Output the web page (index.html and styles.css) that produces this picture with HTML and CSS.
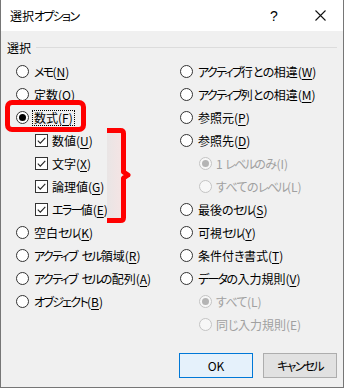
FILE: index.html
```html
<!DOCTYPE html>
<html lang="ja">
<head>
<meta charset="utf-8">
<link rel="stylesheet" href="styles.css">
</head>
<body>
<div class="window">
  <div class="titlebar">
    <span class="title">選択<span class="k">オプション</span></span>
    <span class="help">?</span>
    <span class="close"><svg width="11" height="11" viewBox="0 0 11 11"><path d="M0.5 0.5 L10.5 10.5 M10.5 0.5 L0.5 10.5" stroke="#111" stroke-width="1.1" fill="none"/></svg></span>
  </div>
  <div class="body">
    <div class="group-head"><span>選択</span><div class="rule"></div></div>
    <div class="cols">
      <div class="col">
        <div class="row"><span class="radio"></span><span><span class="k">メモ</span>(<u>N</u>)</span></div>
        <div class="row"><span class="radio"></span><span>定数(<u>O</u>)</span></div>
        <div class="row hl"><span class="radio on"></span><span class="focus">数式(<u>F</u>)</span></div>
        <div class="sub">
          <div class="row"><span class="check"><svg width="11" height="11" viewBox="0 0 11 11"><path d="M1.8 5.6 L4.3 8.1 L9.3 2.8" stroke="#222" stroke-width="1.1" fill="none"/></svg></span><span>数値(<u>U</u>)</span></div>
          <div class="row"><span class="check"><svg width="11" height="11" viewBox="0 0 11 11"><path d="M1.8 5.6 L4.3 8.1 L9.3 2.8" stroke="#222" stroke-width="1.1" fill="none"/></svg></span><span>文字(<u>X</u>)</span></div>
          <div class="row"><span class="check"><svg width="11" height="11" viewBox="0 0 11 11"><path d="M1.8 5.6 L4.3 8.1 L9.3 2.8" stroke="#222" stroke-width="1.1" fill="none"/></svg></span><span>論理値(<u>G</u>)</span></div>
          <div class="row"><span class="check"><svg width="11" height="11" viewBox="0 0 11 11"><path d="M1.8 5.6 L4.3 8.1 L9.3 2.8" stroke="#222" stroke-width="1.1" fill="none"/></svg></span><span><span class="k">エラー</span>値(<u>E</u>)</span></div>
          <svg class="brace" width="28" height="96" viewBox="0 0 28 96">
            <defs>
              <linearGradient id="sh" x1="0" y1="0" x2="1" y2="0">
                <stop offset="0" stop-color="#e9e5e5"/>
                <stop offset="1" stop-color="#f4e4e4"/>
              </linearGradient>
            </defs>
            <rect x="0" y="5" width="14" height="85" fill="url(#sh)"/>
            <path d="M0 2.5 H13.5 Q16.5 2.5 16.5 5.5 V44 L21 47 L16.5 50 V89.5 Q16.5 92.5 13.5 92.5 H0" stroke="#ff0000" stroke-width="5" fill="none" stroke-linejoin="round"/>
          </svg>
        </div>
        <div class="row"><span class="radio"></span><span>空白<span class="k">セル</span>(<u>K</u>)</span></div>
        <div class="row"><span class="radio"></span><span><span class="k">アクティブ</span><span class="sp"> </span><span class="k">セル</span>領域(<u>R</u>)</span></div>
        <div class="row"><span class="radio"></span><span><span class="k">アクティブ</span><span class="sp"> </span><span class="k">セル</span><span class="h">の</span>配列(<u>A</u>)</span></div>
        <div class="row"><span class="radio"></span><span><span class="k">オブジェクト</span>(<u>B</u>)</span></div>
      </div>
      <div class="col">
        <div class="row"><span class="radio"></span><span><span class="k">アクティブ</span>行<span class="h">との</span>相違(<u>W</u>)</span></div>
        <div class="row"><span class="radio"></span><span><span class="k">アクティブ</span>列<span class="h">との</span>相違(<u>M</u>)</span></div>
        <div class="row"><span class="radio"></span><span>参照元(<u>P</u>)</span></div>
        <div class="row"><span class="radio"></span><span>参照先(<u>D</u>)</span></div>
        <div class="row ind dis"><span class="radio on"></span><span>1 <span class="k">レベル</span><span class="h">のみ</span>(I)</span></div>
        <div class="row ind dis"><span class="radio"></span><span><span class="h">すべての</span><span class="k">レベル</span>(L)</span></div>
        <div class="row"><span class="radio"></span><span>最後<span class="h">の</span><span class="k">セル</span>(<u>S</u>)</span></div>
        <div class="row"><span class="radio"></span><span>可視<span class="k">セル</span>(<u>Y</u>)</span></div>
        <div class="row"><span class="radio"></span><span>条件付<span class="h">き</span>書式(<u>T</u>)</span></div>
        <div class="row"><span class="radio"></span><span><span class="k">データ</span><span class="h">の</span>入力規則(<u>V</u>)</span></div>
        <div class="row ind dis"><span class="radio on"></span><span><span class="h">すべて</span>(L)</span></div>
        <div class="row ind dis"><span class="radio"></span><span>同<span class="h">じ</span>入力規則(E)</span></div>
      </div>
    </div>
    <div class="footer">
      <button class="btn ok">OK</button>
      <button class="btn"><span class="k">キャンセル</span></button>
    </div>
  </div>
</div>
</body>
</html>
```

FILE: styles.css
```css
html, body {
  margin: 0;
  padding: 0;
  background: #f0f0f0;
}

body {
  font-family: "Noto Sans CJK JP", "Noto Sans", sans-serif;
  font-size: 12px;
  font-feature-settings: "palt";
  color: #000;
}

/* katakana / hiragana runs: condensed like Meiryo UI */
.k {
  letter-spacing: -1.7px;
}

.h {
  letter-spacing: -0.6px;
}

.sp {
  margin-left: 2px;
}

.window {
  width: 344px;
  height: 388px;
  box-sizing: border-box;
  border: 1px solid #767676;
  border-top: none;
  background: #f0f0f0;
  display: flex;
  flex-direction: column;
}

.titlebar {
  height: 31px;
  flex: none;
  background: #fff;
  display: flex;
  align-items: center;
}

.title {
  flex: 1;
  padding-left: 9px;
  font-size: 12px;
}

.help,
.close {
  width: 46px;
  display: flex;
  justify-content: center;
  align-items: center;
}

.help {
  font-family: "Liberation Sans", sans-serif;
  font-size: 14px;
}

.body {
  padding-top: 8px;
  flex: 1;
}

.group-head {
  display: flex;
  align-items: center;
  height: 16px;
  padding-left: 6px;
}

.rule {
  flex: 1;
  height: 1px;
  background: #dcdcdc;
  margin: 0 6px 0 5px;
}

.cols {
  display: grid;
  grid-template-columns: 164px 1fr;
  padding-left: 15px;
  margin-top: 5px;
}

.row {
  height: 23px;
  display: flex;
  align-items: center;
  gap: 5px;
  white-space: nowrap;
}

u {
  text-underline-offset: 2px;
}

.radio {
  width: 13px;
  height: 13px;
  box-sizing: border-box;
  border: 1px solid #333;
  border-radius: 50%;
  background: #fff;
  flex: none;
  display: flex;
  align-items: center;
  justify-content: center;
}

.radio.on::after {
  content: "";
  width: 7px;
  height: 7px;
  border-radius: 50%;
  background: #000;
}

.row.ind {
  padding-left: 19px;
  gap: 4px;
}

.row.dis {
  color: #a0a0a0;
}

.row.dis .radio {
  border-color: #c4c4c4;
  background: #f7f7f7;
}

.row.dis .radio.on::after {
  background: #b4b4b4;
}

.hl {
  position: relative;
}

.hl::before {
  content: "";
  position: absolute;
  left: -11px;
  top: -6px;
  width: 81px;
  height: 32px;
  box-sizing: border-box;
  border: 5px solid #ff0000;
  border-radius: 7px;
}

.focus {
  display: inline-block;
  line-height: 14px;
  padding: 0 1px;
  margin-left: -1px;
  outline: 1px dotted #000;
}

.sub {
  position: relative;
}

.sub .row {
  padding-left: 19px;
  gap: 4px;
}

.check {
  width: 13px;
  height: 13px;
  box-sizing: border-box;
  border: 1px solid #333;
  background: #fff;
  flex: none;
  display: flex;
}

.brace {
  position: absolute;
  left: 91px;
  top: -1px;
}

.footer {
  display: flex;
  justify-content: flex-end;
  gap: 10px;
  padding-right: 6px;
  margin-top: 17px;
}

.btn {
  width: 74px;
  height: 25px;
  box-sizing: border-box;
  border: 1px solid #adadad;
  background: #e1e1e1;
  font-family: "Noto Sans CJK JP", "Noto Sans", sans-serif;
  font-size: 12px;
  font-feature-settings: "palt";
  color: #000;
  padding: 0;
}

.btn.ok {
  border-color: #0078d7;
  background: #e5f1fb;
}
```
